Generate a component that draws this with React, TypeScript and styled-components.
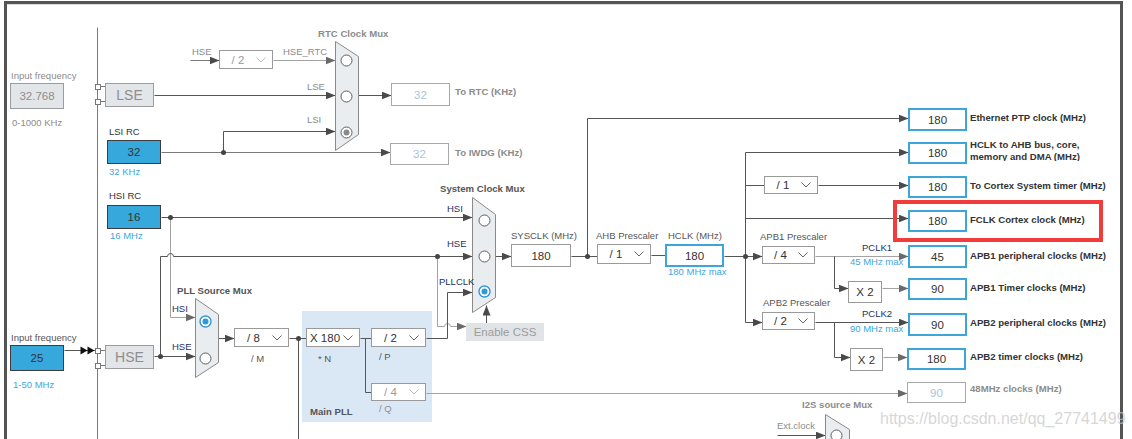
import React from "react";
import styled, { createGlobalStyle, css } from "styled-components";

const GlobalStyle = createGlobalStyle`
  html, body {
    margin: 0;
    padding: 0;
    background: #fff;
  }
  body {
    font-family: "Liberation Sans", Arial, sans-serif;
  }
`;

type Pos = { $x: number; $y: number; $w?: number; $h?: number };

const placed = css<Pos>`
  position: absolute;
  left: ${(p) => p.$x}px;
  top: ${(p) => p.$y}px;
  ${(p) => (p.$w !== undefined ? `width: ${p.$w}px;` : "")}
  ${(p) => (p.$h !== undefined ? `height: ${p.$h}px;` : "")}
  box-sizing: border-box;
`;

const Page = styled.div`
  position: relative;
  width: 1132px;
  height: 439px;
  overflow: hidden;
  background: #fff;
`;

const Frame = styled.div`
  box-sizing: border-box;
  margin: 1px 9px 0 4px;
  height: 500px;
  border: 3px solid #545454;
  border-bottom: none;
  box-shadow: inset 0 1px 0 #dcdcdc;
`;

// the clock tree is a free canvas: every node sits at its own place on it
const Diagram = styled.div`
  position: absolute;
  inset: 0;
`;

const Wires = styled.svg`
  position: absolute;
  left: 0;
  top: 0;
`;

const PllRegion = styled.div<Pos>`
  ${placed}
  background: #dae8f5;
`;

type BoxKind = "source" | "fixed" | "output" | "plain" | "off" | "button";

const boxLook: Record<BoxKind, string> = {
  source: "background:#37a8db;border:1px solid #3c3c3c;color:#333;",
  fixed: "background:#e3e6e9;border:1px solid #9c9c9c;color:#8e8e8e;",
  output: "background:#fff;border:2px solid #3ca6da;color:#333;",
  plain: "background:#fff;border:1px solid #9a9a9a;color:#333;",
  off: "background:#fff;border:1px solid #a8a8a8;color:#a9c4dc;",
  button: "background:#e1e4e7;border:none;color:#9c9c9c;",
};

const ValueBox = styled.div<Pos & { $kind: BoxKind; $big?: boolean }>`
  ${placed}
  display: flex;
  align-items: center;
  justify-content: center;
  white-space: nowrap;
  font-size: ${(p) => (p.$big ? 14 : 11.5)}px;
  ${(p) => boxLook[p.$kind]}
`;

const Prescaler = styled.div<Pos & { $off?: boolean }>`
  ${placed}
  display: flex;
  align-items: center;
  background: #fff;
  border: 1px solid #9a9a9a;
  font-size: 11.5px;
  color: ${(p) => (p.$off ? "#9a9a9a" : "#333")};
`;

const PrescalerValue = styled.span`
  flex: 1;
  text-align: center;
  white-space: nowrap;
`;

const Chevron = styled.svg`
  flex: none;
  width: 10px;
  height: 6px;
  margin-right: 6px;
`;

type Tone = "muted" | "text" | "navy" | "info" | "strong";

const toneColor: Record<Tone, string> = {
  muted: "#8c8c8c",
  text: "#555",
  navy: "#1f2f63",
  info: "#3ea6df",
  strong: "#333",
};

const Label = styled.div<{ $x: number; $y: number; $tone: Tone; $bold?: boolean }>`
  position: absolute;
  left: ${(p) => p.$x}px;
  top: ${(p) => p.$y - 6}px;
  line-height: 12px;
  white-space: nowrap;
  font-size: ${(p) => (p.$bold ? 9.6 : 9.5)}px;
  font-weight: ${(p) => (p.$bold ? 700 : 400)};
  color: ${(p) => toneColor[p.$tone]};
`;

const ClippedName = styled.div<{ $x: number; $y: number }>`
  position: absolute;
  left: ${(p) => p.$x}px;
  top: ${(p) => p.$y}px;
  height: 22px;
  overflow: hidden;
  line-height: 12px;
  font-size: 9.6px;
  font-weight: 700;
  color: #333;
  white-space: nowrap;
`;

const Highlight = styled.div<Pos>`
  ${placed}
  border: 4px solid #f23b3b;
`;

const Watermark = styled.div`
  position: absolute;
  left: 880px;
  top: 409px;
  font-size: 16px;
  line-height: 20px;
  color: rgba(196, 196, 196, 0.7);
  white-space: nowrap;
`;

type LabelSpec = { x: number; y: number; text: string; tone: Tone; bold?: boolean };

const labels: LabelSpec[] = [
  { x: 11, y: 76, text: "Input frequency", tone: "muted" },
  { x: 12, y: 123, text: "0-1000 KHz", tone: "muted" },
  { x: 109, y: 132, text: "LSI RC", tone: "strong" },
  { x: 109, y: 172, text: "32 KHz", tone: "info" },
  { x: 109, y: 196, text: "HSI RC", tone: "strong" },
  { x: 110, y: 236, text: "16 MHz", tone: "info" },
  { x: 11, y: 338, text: "Input frequency", tone: "text" },
  { x: 13, y: 385, text: "1-50 MHz", tone: "info" },
  { x: 318, y: 34, text: "RTC Clock Mux", tone: "muted", bold: true },
  { x: 192, y: 52, text: "HSE", tone: "muted" },
  { x: 283, y: 52, text: "HSE_RTC", tone: "muted" },
  { x: 307, y: 87, text: "LSE", tone: "muted" },
  { x: 307, y: 120, text: "LSI", tone: "muted" },
  { x: 455, y: 92, text: "To RTC (KHz)", tone: "muted", bold: true },
  { x: 455, y: 153, text: "To IWDG (KHz)", tone: "muted", bold: true },
  { x: 440, y: 189, text: "System Clock Mux", tone: "text", bold: true },
  { x: 447, y: 209, text: "HSI", tone: "navy" },
  { x: 447, y: 244, text: "HSE", tone: "navy" },
  { x: 439, y: 282, text: "PLLCLK", tone: "navy" },
  { x: 177, y: 291, text: "PLL Source Mux", tone: "text", bold: true },
  { x: 172, y: 309, text: "HSI", tone: "navy" },
  { x: 172, y: 347, text: "HSE", tone: "navy" },
  { x: 251, y: 359, text: "/ M", tone: "text" },
  { x: 318, y: 359, text: "* N", tone: "text" },
  { x: 379, y: 357, text: "/ P", tone: "text" },
  { x: 379, y: 409, text: "/ Q", tone: "muted" },
  { x: 310, y: 412, text: "Main PLL", tone: "text", bold: true },
  { x: 511, y: 236, text: "SYSCLK (MHz)", tone: "text" },
  { x: 596, y: 236, text: "AHB Prescaler", tone: "text" },
  { x: 668, y: 236, text: "HCLK (MHz)", tone: "text" },
  { x: 668, y: 272, text: "180 MHz max", tone: "info" },
  { x: 760, y: 237, text: "APB1 Prescaler", tone: "text" },
  { x: 862, y: 248, text: "PCLK1", tone: "navy" },
  { x: 850, y: 262, text: "45 MHz max", tone: "info" },
  { x: 763, y: 303, text: "APB2 Prescaler", tone: "text" },
  { x: 862, y: 314, text: "PCLK2", tone: "navy" },
  { x: 850, y: 329, text: "90 MHz max", tone: "info" },
  { x: 802, y: 405, text: "I2S source Mux", tone: "muted", bold: true },
  { x: 777, y: 426, text: "Ext.clock", tone: "muted" },
  { x: 970, y: 118, text: "Ethernet PTP clock (MHz)", tone: "strong", bold: true },
  { x: 970, y: 186, text: "To Cortex System timer (MHz)", tone: "strong", bold: true },
  { x: 970, y: 220, text: "FCLK Cortex clock (MHz)", tone: "strong", bold: true },
  { x: 970, y: 256, text: "APB1 peripheral clocks (MHz)", tone: "strong", bold: true },
  { x: 970, y: 288, text: "APB1 Timer clocks (MHz)", tone: "strong", bold: true },
  { x: 970, y: 323, text: "APB2 peripheral clocks (MHz)", tone: "strong", bold: true },
  { x: 970, y: 357, text: "APB2 timer clocks (MHz)", tone: "strong", bold: true },
  { x: 970, y: 389, text: "48MHz clocks (MHz)", tone: "muted", bold: true },
];

type BoxSpec = { x: number; y: number; w: number; h: number; value: string; kind: BoxKind; big?: boolean };

const boxes: BoxSpec[] = [
  { x: 10, y: 83, w: 54, h: 26, value: "32.768", kind: "fixed" },
  { x: 105, y: 83, w: 49, h: 24, value: "LSE", kind: "fixed", big: true },
  { x: 107, y: 140, w: 54, h: 24, value: "32", kind: "source" },
  { x: 107, y: 205, w: 54, h: 24, value: "16", kind: "source" },
  { x: 10, y: 345, w: 54, h: 26, value: "25", kind: "source" },
  { x: 105, y: 345, w: 49, h: 24, value: "HSE", kind: "fixed", big: true },
  { x: 391, y: 83, w: 59, h: 23, value: "32", kind: "off" },
  { x: 390, y: 143, w: 59, h: 22, value: "32", kind: "off" },
  { x: 466, y: 323, w: 78, h: 18, value: "Enable CSS", kind: "button" },
  { x: 511, y: 244, w: 60, h: 23, value: "180", kind: "plain" },
  { x: 665, y: 244, w: 59, h: 23, value: "180", kind: "output" },
  { x: 908, y: 108, w: 59, h: 23, value: "180", kind: "output" },
  { x: 908, y: 142, w: 59, h: 22, value: "180", kind: "output" },
  { x: 908, y: 176, w: 59, h: 22, value: "180", kind: "output" },
  { x: 908, y: 210, w: 59, h: 22, value: "180", kind: "output" },
  { x: 908, y: 245, w: 59, h: 23, value: "45", kind: "output" },
  { x: 908, y: 278, w: 59, h: 22, value: "90", kind: "output" },
  { x: 908, y: 313, w: 59, h: 23, value: "90", kind: "output" },
  { x: 907, y: 348, w: 59, h: 22, value: "180", kind: "output" },
  { x: 907, y: 382, w: 59, h: 21, value: "90", kind: "off" },
  { x: 848, y: 281, w: 34, h: 22, value: "X 2", kind: "plain" },
  { x: 850, y: 348, w: 33, h: 23, value: "X 2", kind: "plain" },
];

type PrescalerSpec = { x: number; y: number; w: number; h: number; value: string; off?: boolean };

const prescalers: PrescalerSpec[] = [
  { x: 219, y: 50, w: 54, h: 19, value: "/ 2", off: true },
  { x: 234, y: 328, w: 55, h: 19, value: "/ 8" },
  { x: 306, y: 328, w: 54, h: 19, value: "X 180" },
  { x: 371, y: 328, w: 55, h: 19, value: "/ 2" },
  { x: 371, y: 383, w: 55, h: 18, value: "/ 4", off: true },
  { x: 597, y: 244, w: 54, h: 20, value: "/ 1" },
  { x: 764, y: 176, w: 54, h: 18, value: "/ 1" },
  { x: 762, y: 246, w: 53, h: 18, value: "/ 4" },
  { x: 762, y: 312, w: 53, h: 18, value: "/ 2" },
];

type WireTone = "dark" | "mid" | "light";
const wireColor: Record<WireTone, string> = { dark: "#555", mid: "#7a7a7a", light: "#a3a3a3" };

type WireSpec = { d: string; tone: WireTone; arrow?: boolean };

const wires: WireSpec[] = [
  { d: "M97 27 V439", tone: "mid" },
  { d: "M100 86 H105 M100 101 H105 M100 350 H105 M100 365 H105", tone: "mid" },
  { d: "M190 60 H219", tone: "mid", arrow: true },
  { d: "M273 60 H335", tone: "light", arrow: true },
  { d: "M154 95 H335", tone: "dark", arrow: true },
  { d: "M223 152 V131 H335", tone: "dark", arrow: true },
  { d: "M161 152 H390", tone: "mid", arrow: true },
  { d: "M358 95 H391", tone: "dark", arrow: true },
  { d: "M161 217 H472", tone: "dark", arrow: true },
  { d: "M170 217 V317 H195", tone: "light", arrow: true },
  { d: "M64 350 H95", tone: "dark" },
  { d: "M154 356 H195", tone: "dark", arrow: true },
  { d: "M160 356 V256 H167 A3 3 0 0 1 173 256 H472", tone: "dark", arrow: true },
  { d: "M437 256 V326 H444 A3 3 0 0 1 450 326 H466", tone: "light", arrow: true },
  { d: "M218 338 H234", tone: "dark", arrow: true },
  { d: "M289 338 H306", tone: "dark" },
  { d: "M298 338 V439", tone: "dark" },
  { d: "M360 338 H371 M365 338 V392 H371", tone: "dark" },
  { d: "M426 338 H447 V292 H472", tone: "dark", arrow: true },
  { d: "M486 323 V305", tone: "dark", arrow: true },
  { d: "M426 393 H907", tone: "light", arrow: true },
  { d: "M495 256 H511", tone: "dark", arrow: true },
  { d: "M571 256 H597", tone: "dark" },
  { d: "M587 256 V118 H908", tone: "dark", arrow: true },
  { d: "M651 255 H665", tone: "dark" },
  { d: "M724 256 H762", tone: "dark", arrow: true },
  { d: "M745 152 V322", tone: "dark" },
  { d: "M745 152 H908", tone: "dark", arrow: true },
  { d: "M745 185 H764", tone: "dark" },
  { d: "M818 185 H908", tone: "dark", arrow: true },
  { d: "M745 218 H908", tone: "dark", arrow: true },
  { d: "M745 322 H762", tone: "dark", arrow: true },
  { d: "M815 256 H908", tone: "light", arrow: true },
  { d: "M834 256 V288 H848", tone: "dark", arrow: true },
  { d: "M882 288 H908", tone: "light", arrow: true },
  { d: "M815 322 H908", tone: "dark", arrow: true },
  { d: "M834 322 V357 H850", tone: "dark", arrow: true },
  { d: "M883 357 H907", tone: "light", arrow: true },
  { d: "M777 435 H825", tone: "dark", arrow: true },
];

const junctions: [number, number][] = [
  [223, 152],
  [170, 217],
  [160, 356],
  [437, 256],
  [298, 338],
  [587, 256],
  [745, 256],
];

const connectors: [number, number][] = [
  [95, 84],
  [95, 99],
  [95, 348],
  [95, 363],
];

type MuxSpec = { points: string; radios: { cx: number; cy: number; on?: boolean }[]; muted?: boolean };

const muxes: MuxSpec[] = [
  {
    points: "335,41 358,56 358,134 335,150",
    muted: true,
    radios: [{ cx: 346, cy: 60 }, { cx: 346, cy: 96 }, { cx: 346, cy: 132, on: true }],
  },
  {
    points: "472,197 495,214 495,297 472,312",
    radios: [{ cx: 484, cy: 220 }, { cx: 484, cy: 256 }, { cx: 484, cy: 291, on: true }],
  },
  {
    points: "195,298 218,314 218,362 195,377",
    radios: [{ cx: 205, cy: 321, on: true }, { cx: 205, cy: 358 }],
  },
  {
    points: "825,414 849,429 849,460 825,470",
    radios: [{ cx: 836, cy: 435 }],
  },
];

const Radio = ({ cx, cy, on, muted }: { cx: number; cy: number; on?: boolean; muted?: boolean }) => {
  const ring = on && !muted ? "#2f97dc" : "#5e5e5e";
  return (
    <g>
      <circle cx={cx} cy={cy} r={5.5} fill="#fff" stroke={ring} strokeWidth={on && !muted ? 1.4 : 1} />
      {on && <circle cx={cx} cy={cy} r={3} fill={muted ? "#8a8a8a" : "#2f97dc"} />}
    </g>
  );
};

const App = () => {
  return (
    <>
      <GlobalStyle />
      <Page>
        <Frame />
        <Diagram>
          <PllRegion $x={302} $y={311} $w={130} $h={111} />
          <Wires width={1132} height={439} viewBox="0 0 1132 439">
            <defs>
              {(["dark", "mid", "light"] as WireTone[]).map((t) => (
                <marker
                  key={t}
                  id={`arrow-${t}`}
                  viewBox="0 0 10 8"
                  refX={10}
                  refY={4}
                  markerWidth={10}
                  markerHeight={8}
                  markerUnits="userSpaceOnUse"
                  orient="auto"
                >
                  <path d="M0 0 L10 4 L0 8 Z" fill={t === "light" ? "#6a6a6a" : "#4a4a4a"} />
                </marker>
              ))}
            </defs>
            <g transform="translate(0.5 0.5)">
              {wires.map((w, i) => (
                <path
                  key={i}
                  d={w.d}
                  fill="none"
                  stroke={wireColor[w.tone]}
                  strokeWidth={1}
                  markerEnd={w.arrow ? `url(#arrow-${w.tone})` : undefined}
                />
              ))}
              <path d="M80 346 L87 350 L80 354 Z M87 346 L94 350 L87 354 Z" fill="#111" />
              {junctions.map(([x, y]) => (
                <circle key={`${x}-${y}`} cx={x} cy={y} r={2.5} fill="#444" />
              ))}
              {connectors.map(([x, y]) => (
                <rect key={`${x}-${y}`} x={x} y={y} width={5} height={5} fill="#fff" stroke="#777" />
              ))}
              {muxes.map((m, i) => (
                <g key={i}>
                  <polygon points={m.points} fill="#e9edf0" stroke="#8a8a8a" />
                  {m.radios.map((r) => (
                    <Radio key={r.cy} cx={r.cx} cy={r.cy} on={r.on} muted={m.muted} />
                  ))}
                </g>
              ))}
            </g>
          </Wires>

          {boxes.map((b, i) => (
            <ValueBox key={i} $x={b.x} $y={b.y} $w={b.w} $h={b.h} $kind={b.kind} $big={b.big}>
              {b.value}
            </ValueBox>
          ))}

          {prescalers.map((p, i) => (
            <Prescaler key={i} $x={p.x} $y={p.y} $w={p.w} $h={p.h} $off={p.off}>
              <PrescalerValue>{p.value}</PrescalerValue>
              <Chevron viewBox="0 0 10 6">
                <polyline points="0.5,0.5 5,5 9.5,0.5" fill="none" stroke={p.off ? "#bdbdbd" : "#666"} />
              </Chevron>
            </Prescaler>
          ))}

          {labels.map((l, i) => (
            <Label key={i} $x={l.x} $y={l.y} $tone={l.tone} $bold={l.bold}>
              {l.text}
            </Label>
          ))}

          <ClippedName $x={970} $y={139}>
            HCLK to AHB bus, core,
            <br />
            memory and DMA (MHz)
          </ClippedName>

          <Highlight $x={893} $y={200} $w={210} $h={42} />
          <Watermark>https://blog.csdn.net/qq_27741499</Watermark>
        </Diagram>
      </Page>
    </>
  );
};

export default App;
